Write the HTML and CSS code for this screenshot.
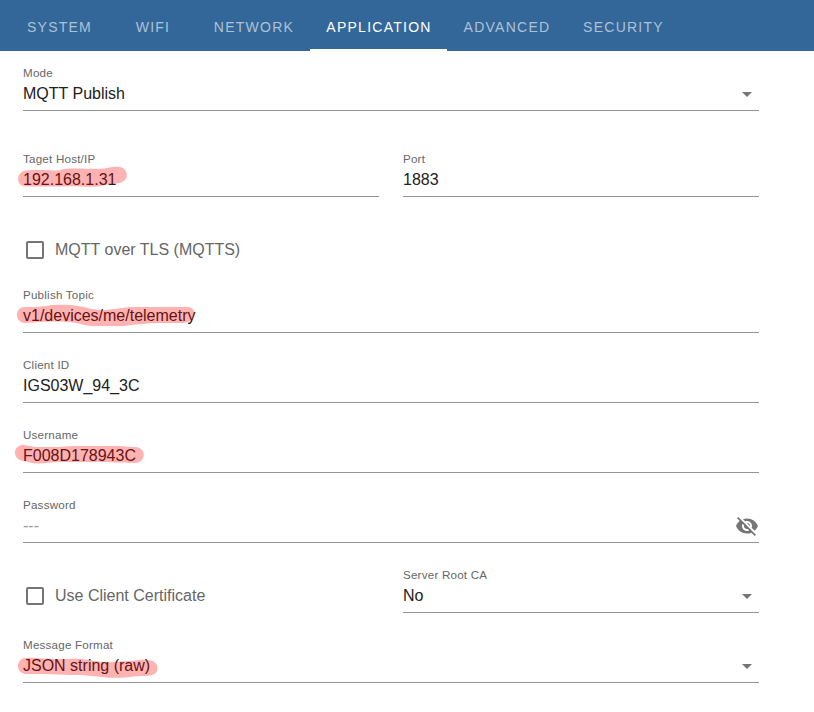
FILE: index.html
```
<!DOCTYPE html>
<html lang="en">
<head>
<meta charset="utf-8">
<title>Application</title>
<link rel="stylesheet" href="styles.css">
</head>
<body>
<nav class="tabs">
  <a class="tab">SYSTEM</a>
  <a class="tab">WIFI</a>
  <a class="tab">NETWORK</a>
  <a class="tab active">APPLICATION</a>
  <a class="tab">ADVANCED</a>
  <a class="tab">SECURITY</a>
</nav>
<main class="form">
  <div class="field wide first">
    <span class="label">Mode</span>
    <div class="value">MQTT Publish</div>
    <svg class="arrow" viewBox="0 0 24 24"><path d="M7 10l5 5 5-5z"/></svg>
  </div>
  <div class="field">
    <span class="label">Taget Host/IP</span>
    <div class="value">192.168.1.31</div>
    <svg class="mark" viewBox="0 0 200 48"><path d="M3 21.500C14 20.500 27 21.500 36 21.500C41 19.500 46 19.500 52 19.500C65 19.500 76 20.500 84 19C92 17.500 100 16.500 103 22.500C106 29.500 101 33.500 94 34.500C86 34.500 82 36.500 75 37.500C63 38.500 53 36.500 42 37.500L3 37.500C-8 37-7 22.500 3 21.500Z"/></svg>
  </div>
  <div class="field">
    <span class="label">Port</span>
    <div class="value">1883</div>
  </div>
  <label class="check wide tls"><span class="box"></span><span class="caption">MQTT over TLS (MQTTS)</span></label>
  <div class="field wide">
    <span class="label">Publish Topic</span>
    <div class="value">v1/devices/me/telemetry</div>
    <svg class="mark" viewBox="0 0 200 48"><path d="M1 22C10 22 16 22 24 21C34 19 48 20 55 21C64 22 69 25 79 25C89 25 96 23 107 22L164 22C170 22 173 27 171 31C169 36 166 37 160 38L140 38C121 38 112 40 100 41L70 41C61 41 55 37 44 37C30 36 17 37 2 38C-8 38-9 23 1 22Z"/></svg>
  </div>
  <div class="field wide">
    <span class="label">Client ID</span>
    <div class="value">IGS03W_94_3C</div>
  </div>
  <div class="field wide">
    <span class="label">Username</span>
    <div class="value">F008D178943C</div>
    <svg class="mark" viewBox="0 0 200 48"><path d="M-1 20C5 20 7 22 17 22C29 22 40 22 51 21L94 21C100 21 104 22 112 22C120 22 122 29 120 33C118 38 113 38 107 38C102 37 96 38 84 37L35 37C27 37 22 39 14 38.500C7 38 6 37 0 36C-11 34-10 21-1 20Z"/></svg>
  </div>
  <div class="field wide">
    <span class="label">Password</span>
    <div class="value placeholder">---</div>
    <svg class="eye" viewBox="0 0 24 24"><path d="M12 7c2.760 0 5 2.240 5 5 0 .65-.13 1.260-.36 1.830l2.920 2.920c1.510-1.260 2.700-2.890 3.430-4.750-1.730-4.390-6-7.500-11-7.500-1.400 0-2.740.25-3.980.7l2.160 2.160C10.740 7.130 11.350 7 12 7zM2 4.270l2.280 2.280.46.46C3.080 8.300 1.780 10.020 1 12c1.730 4.390 6 7.500 11 7.500 1.550 0 3.030-.3 4.380-.84l.42.42L19.730 22 21 20.730 3.270 3 2 4.270zM7.530 9.800l1.550 1.550c-.05.21-.08.43-.08.65 0 1.660 1.340 3 3 3 .22 0 .44-.03.65-.08l1.550 1.550c-.67.33-1.410.53-2.200.53-2.760 0-5-2.240-5-5 0-.79.2-1.530.53-2.200zm4.310-.78l3.150 3.150.02-.16c0-1.660-1.340-3-3-3l-.17.01z"/></svg>
  </div>
  <label class="check"><span class="box"></span><span class="caption">Use Client Certificate</span></label>
  <div class="field">
    <span class="label">Server Root CA</span>
    <div class="value">No</div>
    <svg class="arrow" viewBox="0 0 24 24"><path d="M7 10l5 5 5-5z"/></svg>
  </div>
  <div class="field wide">
    <span class="label">Message Format</span>
    <div class="value">JSON string (raw)</div>
    <svg class="arrow" viewBox="0 0 24 24"><path d="M7 10l5 5 5-5z"/></svg>
    <svg class="mark" viewBox="0 0 200 48"><path d="M2 23C13 22 22 24 34 24C46 24 56 23 66 25C80 28 91 27 105 26C112 26 116 24 124 25C133 25 136 31 134 36C132 41 124 41 117 41C106 42 91 44 80 42C69 41 63 40 50 40C40 40 31 39 20 39L3 39C-8 38-7 24 2 23Z"/></svg>
  </div>
</main>
</body>
</html>
```
FILE: styles.css
```
* {
  box-sizing: border-box;
}

body {
  margin: 0;
  background: #fff;
  color: #212121;
  font: 16px/19px "Liberation Sans", Arial, sans-serif;
}

.tabs {
  display: grid;
  grid-template-columns: 97px 90px 112px 137px 120px 113px;
  height: 51px;
  padding: 0 11px;
  background: #336799;
}

.tab {
  display: flex;
  align-items: center;
  justify-content: center;
  padding-top: 5px;
  border-bottom: 2px solid transparent;
  color: rgba(255, 255, 255, .6);
  font-size: 14px;
  letter-spacing: 1.25px;
  white-space: nowrap;
}

.tab.active {
  padding-left: 1px;
  border-color: #fff;
  color: #fff;
}

.form {
  display: grid;
  grid-template-columns: 356px 356px;
  gap: 22px 24px;
  padding: 12px 0 0 23px;
}

.wide {
  grid-column: span 2;
}

.field {
  position: relative;
  height: 48px;
  border-bottom: 1px solid #949494;
}

.first {
  margin-bottom: 16px;
}

.label {
  display: block;
  height: 16px;
  padding-top: 3px;
  color: #666;
  font-size: 11.6px;
  line-height: 14px;
  letter-spacing: .22px;
}

.value {
  padding-top: 5px;
}

.placeholder {
  color: #9b9b9b;
}

.check {
  display: flex;
  align-items: center;
  height: 48px;
  padding: 14px 0 0 3px;
  color: #666;
}

.tls {
  height: 44px;
  padding-top: 18px;
}

.caption {
  padding-bottom: 2px;
}

.box {
  width: 18px;
  height: 18px;
  margin-right: 11px;
  border: 2px solid #757575;
  border-radius: 2px;
}

.arrow,
.eye {
  position: absolute;
  top: 19px;
  right: 0;
  width: 24px;
  height: 24px;
  fill: #757575;
}

.mark {
  position: absolute;
  top: 0;
  left: 0;
  width: 200px;
  height: 48px;
  overflow: visible;
  fill: rgba(255, 0, 0, .3);
}
```
